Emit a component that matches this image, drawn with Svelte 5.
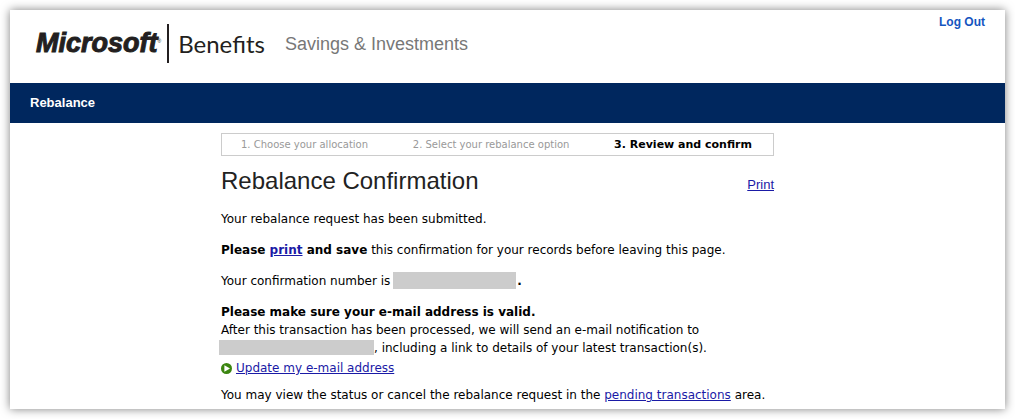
<script>
  const steps = [
    { label: '1. Choose your allocation', current: false },
    { label: '2. Select your rebalance option', current: false },
    { label: '3. Review and confirm', current: true }
  ];
</script>

<div class="page">
  <header>
    <div class="brand">
      <span class="microsoft">Microsoft<sup>®</sup></span>
      <span class="divider"></span>
      <span class="benefits">Benefits</span>
      <span class="section">Savings &amp; Investments</span>
    </div>
    <a class="logout" href="#logout">Log Out</a>
  </header>

  <nav>Rebalance</nav>

  <main>
    <ol class="steps">
      {#each steps as step}
        <li class:current={step.current} aria-current={step.current ? 'step' : undefined}>{step.label}</li>
      {/each}
    </ol>

    <div class="title">
      <h1>Rebalance Confirmation</h1>
      <a href="#print">Print</a>
    </div>

    <p>Your rebalance request has been submitted.</p>
    <p><strong>Please <a href="#print">print</a> and save</strong> this confirmation for your records before leaving this page.</p>
    <p>Your confirmation number is <span class="redacted number"></span><strong>.</strong></p>
    <div class="notice">
      <strong>Please make sure your e-mail address is valid.</strong><br />
      After this transaction has been processed, we will send an e-mail notification to<br />
      <span class="redacted email"></span>, including a link to details of your latest transaction(s).
    </div>
    <div class="update">
      <svg width="11" height="11" viewBox="0 0 11 11" aria-hidden="true">
        <circle cx="5.5" cy="5.5" r="5.5" fill="#3b8510" />
        <path d="M3.4 2.3 L9 5.5 L3.4 8.7 Z" fill="#fff" />
      </svg>
      <a href="#email">Update my e-mail address</a>
    </div>
    <p>You may view the status or cancel the rebalance request in the <a href="#pending">pending transactions</a> area.</p>
  </main>
</div>

<style>
  :global(body) {
    background: #fff;
  }
  .page {
    margin: 10px;
    background: #fff;
    box-shadow: 0 0 9px rgba(0, 0, 0, 0.5);
    font: 12px/18px Verdana, "DejaVu Sans", sans-serif;
    color: #000;
  }
  header {
    display: flex;
    justify-content: space-between;
    align-items: flex-start;
    padding: 4px 20px 20px 26px;
  }
  .brand {
    display: flex;
    align-items: center;
    padding-top: 10px;
    color: #231f20;
  }
  .microsoft {
    display: flex;
    font: italic bold 27px/39px "Liberation Sans", Arial, sans-serif;
    -webkit-text-stroke: 1px #231f20;
  }
  .microsoft sup {
    padding-top: 14px;
    font: 5px/6px "Liberation Sans", Arial, sans-serif;
    -webkit-text-stroke: 0;
  }
  .divider {
    width: 2px;
    height: 39px;
    margin: 0 9px 0 6px;
    background: #231f20;
  }
  .benefits {
    font: 24px/38px Lato, sans-serif;
  }
  .section {
    margin-left: 20px;
    font: 18px/38px "Liberation Sans", Arial, sans-serif;
    color: #777;
  }
  .logout {
    font: bold 12px/16px "Liberation Sans", Arial, sans-serif;
    color: #1455c0;
    text-decoration: none;
  }
  nav {
    padding: 0 20px;
    background: #00275e;
    color: #fff;
    font: bold 13px/40px "Liberation Sans", Arial, sans-serif;
  }
  main {
    max-width: 553px;
    padding: 10px 20px 5px 211px;
  }
  .steps {
    display: flex;
    justify-content: space-between;
    margin: 0;
    padding: 0 21px 0 19px;
    border: 1px solid #ccc;
    list-style: none;
    font-size: 10px;
    line-height: 21px;
    color: #999;
  }
  .current {
    font-size: 11px;
    font-weight: bold;
    color: #000;
  }
  .title {
    display: flex;
    justify-content: space-between;
    align-items: baseline;
    padding: 11px 0 15px;
    font-family: "Liberation Sans", Arial, sans-serif;
  }
  h1 {
    margin: 0;
    font-size: 24px;
    font-weight: normal;
    line-height: 28px;
    color: #222;
  }
  .title a {
    font-size: 13px;
  }
  main a {
    color: #1a1aa6;
  }
  p {
    margin: 0 0 13px;
  }
  p:last-child {
    margin: 0;
  }
  .redacted {
    display: inline-block;
    background: #ccc;
    vertical-align: middle;
  }
  .number {
    width: 123px;
    height: 17px;
    margin: -3px 1px 0 -1px;
  }
  .email {
    width: 155px;
    height: 15px;
    margin: -2px 0 0 -2px;
  }
  .update {
    display: flex;
    align-items: center;
    gap: 4px;
    padding: 2px 0 9px;
  }
</style>
